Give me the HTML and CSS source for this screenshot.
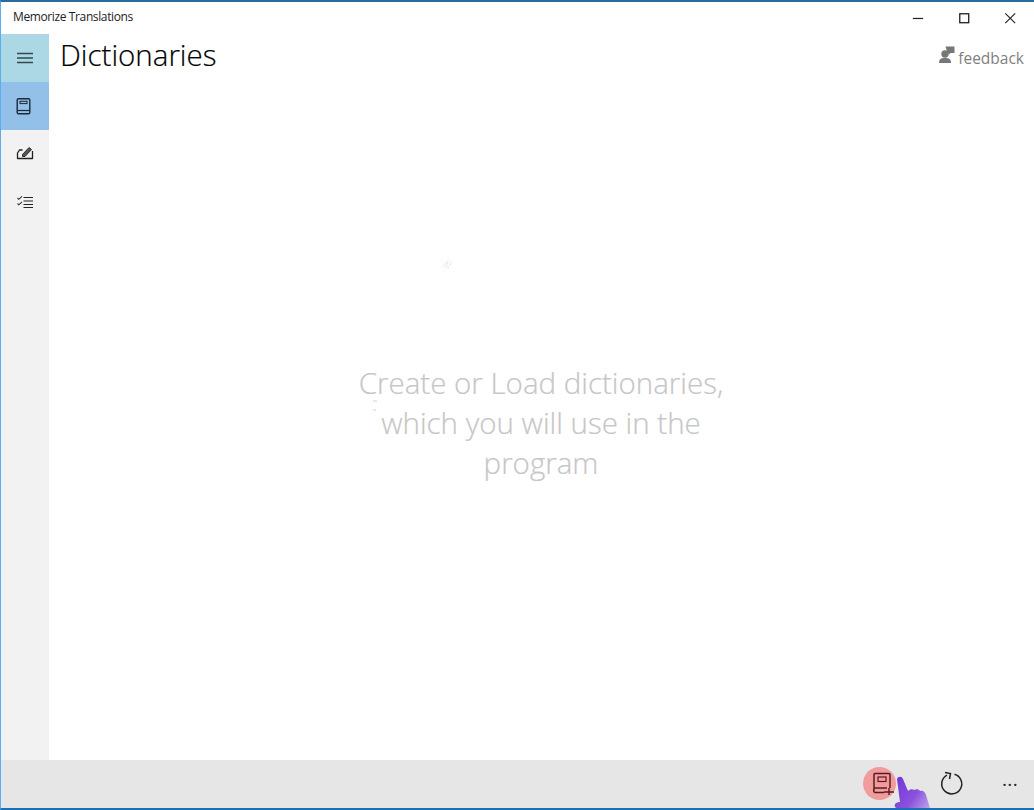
FILE: index.html
```html
<!DOCTYPE html>
<html lang="en">
<head>
<meta charset="utf-8">
<title>Memorize Translations</title>
<link rel="stylesheet" href="styles.css">
</head>
<body>
<div class="window">
  <header class="titlebar">
    <span class="app-name">Memorize Translations</span>
    <div class="win-controls">
      <svg class="win-btn" viewBox="0 0 46 34"><path d="M17.500 17.500h11" fill="none" stroke="#222" stroke-width="1.300"/></svg>
      <svg class="win-btn" viewBox="0 0 46 34"><rect x="18.500" y="12.500" width="9.500" height="9.500" fill="none" stroke="#222" stroke-width="1.400"/></svg>
      <svg class="win-btn" viewBox="0 0 46 34"><path d="M18 12l10.500 10.500M28.500 12L18 22.500" fill="none" stroke="#222" stroke-width="1.200"/></svg>
    </div>
  </header>
  <div class="middle">
    <nav class="sidebar">
      <div class="nav-item nav-menu">
        <svg class="nav-icon" viewBox="0 0 20 20"><path d="M2 5.500h16M2 10h16M2 14.500h16" stroke="#33474f" stroke-width="1.400" fill="none"/></svg>
      </div>
      <div class="nav-item nav-active">
        <svg class="nav-icon" viewBox="0 0 20 20"><rect x="2.200" y="2.700" width="12.600" height="15" rx="1.300" fill="none" stroke="#1c2b38" stroke-width="1.400"/><path d="M2.200 14.500h12.600" stroke="#1c2b38" stroke-width="1.200"/><rect x="5" y="5.300" width="7" height="2.300" fill="none" stroke="#1c2b38" stroke-width="1"/></svg>
      </div>
      <div class="nav-item">
        <svg class="nav-icon" viewBox="0 0 20 20"><path d="M7.500 6H4.500L2.500 9V14.500H17.500V7" fill="none" stroke="#222" stroke-width="1.300" stroke-linejoin="round"/><path d="M7.500 12.500V10.500L14 3.500L16.500 5.500L10 12.500z" fill="#555" stroke="#222" stroke-width="0.900"/></svg>
      </div>
      <div class="nav-item">
        <svg class="nav-icon" viewBox="0 0 20 20"><path d="M8.500 5.500H18M8.500 9H18M8.500 12.500H18M8.500 15.500H18" stroke="#222" stroke-width="1.200" fill="none"/><path d="M2.500 6l1.300 1.300L7 4.300M2.500 11.500l1.300 1.300L7 9.800" stroke="#333" stroke-width="1.100" fill="none"/></svg>
      </div>
    </nav>
    <main class="content">
      <div class="page-head">
        <h1 class="page-title">Dictionaries</h1>
        <div class="feedback">
          <svg class="feedback-icon" viewBox="0 0 16 17"><circle cx="6" cy="8" r="3.700" fill="#777"/><path d="M0 17c0-3.800 2-5 6-5s6 1.200 6 5z" fill="#777"/><path d="M6.500 0.500h9v6.500H11.500L9.500 9V7H8.500z" fill="#777"/></svg>
          <span>feedback</span>
        </div>
      </div>
      <p class="placeholder">Create or Load dictionaries, which you will use in the program</p>
      <svg class="speck speck-a" viewBox="0 0 12 12"><path d="M2 9l2-5M5 8l1-5M8 7l1-3M4 10l3-1" stroke="#f6c8cf" stroke-width="1" stroke-dasharray="1 1" fill="none"/></svg>
      <svg class="speck speck-b" viewBox="0 0 6 12"><path d="M1 1h4M1 10h3" stroke="#f2c4cb" stroke-width="1" fill="none"/></svg>
    </main>
  </div>
  <footer class="appbar">
    <div class="app-btn">
      <span class="touch-dot"></span>
      <svg class="app-icon" viewBox="0 0 26 26"><path d="M3 19V3.500a1 1 0 0 1 1-1H18a1 1 0 0 1 1 1V17" fill="none" stroke="#5b1a22" stroke-width="1.500"/><path d="M3 18.500a2 2 0 0 0 1 3H13M3 17h13" fill="none" stroke="#5b1a22" stroke-width="1.500"/><rect x="7" y="6" width="8" height="4.500" fill="none" stroke="#5b1a22" stroke-width="1.200"/><path d="M13 21h10M18 17v7" fill="none" stroke="#5b1a22" stroke-width="1.400"/></svg>
    </div>
    <div class="app-btn">
      <svg class="app-icon" viewBox="0 0 26 26"><path d="M15.500 3.300a10 10 0 1 1-7.500 .8" fill="none" stroke="#222" stroke-width="1.500"/><path d="M6 1.500L11.500 2.500L10.500 8" fill="none" stroke="#222" stroke-width="1.500"/></svg>
    </div>
    <div class="app-more">···</div>
    <svg class="hand" viewBox="0 0 40 44"><defs><linearGradient id="handfill" x1="0" y1="0" x2="1" y2="0.800"><stop offset="0" stop-color="#7335d6"/><stop offset="0.550" stop-color="#8a52dc"/><stop offset="1" stop-color="#c9b4ee"/></linearGradient></defs><path d="M4 4c1-3 5-3 6 0l5 12c2-2 5-2 6-1c2-1 5-1 6 1c3-1 5 1 6 4l4 13l2 11H8L7 36L2 32c-1-3 1-5 5-5z" fill="url(#handfill)"/></svg>
  </footer>
</div>
</body>
</html>
```

FILE: styles.css
```css
* { box-sizing: border-box; }
html, body { margin: 0; height: 100%; background: #fff; overflow: hidden; }
.window {
  width: 1034px; height: 810px; display: flex; flex-direction: column;
  border-top: 2px solid #2a6a9c; border-bottom: 2px solid #1c6fb0; border-left: 1px solid #5aaef0;
  font-family: "Open Sans", "Noto Sans", sans-serif; background: #fff; position: relative;
}
.titlebar { height: 32px; display: flex; align-items: center; justify-content: space-between; flex: none; }
.app-name { font-size: 12px; color: #222; margin-left: 12px; margin-bottom: 3px; letter-spacing: -0.38px; }
.win-controls { display: flex; margin-right: 1px; }
.win-btn { width: 46px; height: 32px; display: block; }
.middle { flex: 1; display: flex; min-height: 0; }
.sidebar { width: 48px; background: #f2f2f2; flex: none; display: flex; flex-direction: column; }
.nav-item { height: 48px; display: flex; align-items: center; justify-content: center; }
.nav-menu { background: #acd8e6; }
.nav-active { background: #92c0e8; }
.nav-icon { width: 20px; height: 20px; display: block; }
.content { flex: 1; position: relative; display: flex; flex-direction: column; min-width: 0; }
.page-head { display: flex; justify-content: space-between; align-items: flex-start; padding: 0 10px 0 11px; }
.page-title { margin: 0; font-weight: 300; font-size: 29.500px; line-height: 42px; color: #000; -webkit-text-stroke: 0.2px #000; }
.feedback { display: flex; align-items: flex-end; gap: 3px; color: #808080; font-size: 15.500px; line-height: 22px; margin-top: 12px; font-weight: 400; }
.feedback-icon { width: 16px; height: 17px; margin-bottom: 6px; }
.placeholder {
  position: absolute; left: 304px; top: 329px; width: 376px; margin: 0; text-align: center;
  font-size: 29.500px; line-height: 40px; font-weight: 300; color: #c6c6c6; -webkit-text-stroke: 0.2px #c6c6c6;
}
.speck { position: absolute; display: block; }
.speck-a { left: 393px; top: 224px; width: 12px; height: 12px; }
.speck-b { left: 323px; top: 366px; width: 6px; height: 12px; }
.appbar { height: 48px; flex: none; background: #e6e6e6; display: flex; justify-content: flex-end; align-items: center; position: relative; overflow: hidden; }
.app-btn { width: 68px; height: 48px; display: flex; align-items: center; justify-content: center; position: relative; }
.touch-dot { position: absolute; left: 13px; top: 7px; width: 33px; height: 33px; border-radius: 50%; background: #f09c9c; }
.app-icon { width: 26px; height: 26px; display: block; position: relative; }
.app-more { width: 48px; height: 48px; display: flex; align-items: center; justify-content: center; font-size: 19px; color: #222; letter-spacing: 0.3px; }
.hand { position: absolute; left: 892px; top: 15px; width: 40px; height: 44px; }
```
